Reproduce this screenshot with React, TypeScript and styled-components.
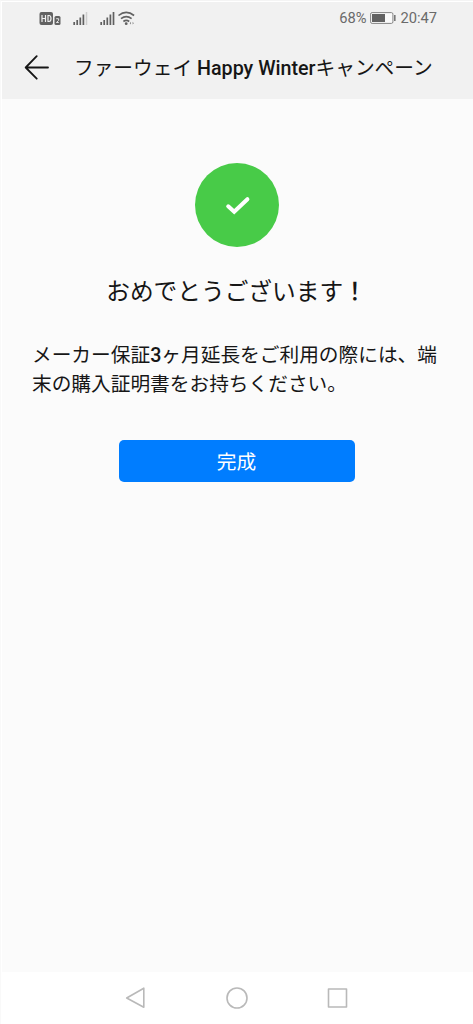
import React from 'react';
import styled, { createGlobalStyle } from 'styled-components';

const GlobalStyle = createGlobalStyle`
  * { box-sizing: border-box; }
  body {
    margin: 0;
    background: #fff;
    color: #161616;
    font-family: 'Noto Sans CJK JP', sans-serif;
  }
`;

const Screen = styled.div`
  width: 473px;
  height: 1024px;
  padding: 1px 0 0 1px;
  border-top: 1px solid #f4f4f4;
  border-left: 1px solid #f9f9f9;
  display: flex;
  flex-direction: column;
  overflow: hidden;
`;

const StatusBar = styled.div`
  flex: none;
  height: 34px;
  padding: 0 36px 2px 37px;
  display: flex;
  align-items: center;
  justify-content: space-between;
  background: #f1f1f1;
`;

const StatusIcons = styled.svg`
  display: block;
`;

const StatusInfo = styled.div`
  display: flex;
  align-items: center;
  gap: 4px;
  color: #6a6a6a;
  font: 400 14.7px/20px Roboto, sans-serif;
`;

const Header = styled.header`
  flex: none;
  height: 63px;
  padding: 0 0 1px 22px;
  display: flex;
  align-items: center;
  gap: 25px;
  background: #f1f1f1;
`;

const BackButton = styled.button`
  width: 25px;
  height: 25px;
  padding: 0;
  border: 0;
  background: none;
  svg { display: block; }
`;

const Title = styled.h1`
  margin: 0;
  font-size: 19.7px;
  line-height: 30px;
  font-weight: 400;
  white-space: nowrap;
`;

const Latin = styled.span`
  font-family: Roboto, sans-serif;
  font-weight: 500;
  line-height: 1;
`;

const Main = styled.main`
  flex: 1;
  padding: 64px 32px 0 30px;
  display: flex;
  flex-direction: column;
  align-items: center;
  background: #fbfbfb;
`;

const Badge = styled.div`
  width: 84px;
  height: 84px;
  border-radius: 50%;
  background: #48cb48;
  svg { display: block; }
`;

const Heading = styled.h2`
  margin: 25px 0 0;
  font-size: 23.7px;
  line-height: 36px;
  font-weight: 400;
  white-space: nowrap;
`;

const Exclamation = styled.span`
  font-weight: 500;
  line-height: 1;
`;

const Message = styled.p`
  align-self: stretch;
  margin: 31px 0 0;
  font-size: 19.7px;
  line-height: 29px;
  white-space: nowrap;
`;

const DoneButton = styled.button`
  width: 236px;
  height: 42px;
  margin-top: 43px;
  padding: 0;
  border: 0;
  border-radius: 5px;
  background: #007dff;
  color: #fff;
  font: 400 19.7px/42px 'Noto Sans CJK JP', sans-serif;
`;

const NavBar = styled.nav`
  flex: none;
  height: 52px;
  padding: 0 124px 0 122px;
  display: flex;
  align-items: center;
  justify-content: space-between;
  background: #fff;
`;

const NavIcon = styled.svg`
  display: block;
  fill: none;
  stroke: #b9b9b9;
  stroke-width: 1.6;
  stroke-linejoin: round;
`;

export default function App() {
  return (
    <Screen>
      <GlobalStyle />
      <StatusBar>
        <StatusIcons width="98" height="20" viewBox="39 8 98 20">
          <rect x="39.5" y="12" width="13.5" height="13" rx="2" fill="#626262" />
          <path d="M42 15v7M45.5 15v7M42 18.5h3.5M48 15.5v6h1q2 0 2-3t-2-3z" fill="none" stroke="#f1f1f1" strokeWidth="1.2" />
          <rect x="54.5" y="16" width="6" height="9" rx="1.5" fill="#626262" />
          <path d="M56.2 18.7h2.4v1.8l-2.2 2h2.4" fill="none" stroke="#f1f1f1" strokeWidth=".9" />
          <path d="M74.2 22v3M77.2 20v5M80.3 17.5v7.5M83.4 14.5v10.5M101.2 22v3M104.2 20v5M107.3 17.5v7.5M110.4 14.5v10.5M113.5 12v13" stroke="#606060" strokeWidth="1.7" />
          <path d="M86.5 12v13" stroke="#cecece" strokeWidth="1.5" />
          <path d="M118.5 15.5q7.7-6.2 15.6 0M121 18.7q5.3-4.2 10.6 0M123.4 21.5q2.9-2.3 5.8 0" fill="none" stroke="#626262" strokeWidth="1.6" />
          <circle cx="126.2" cy="23.7" r="1.4" fill="#626262" />
          <path d="M131 21.8l-1.3 1.4 1.3 1.4zM132.6 21.8l1.3 1.4-1.3 1.4z" fill="#888" />
        </StatusIcons>
        <StatusInfo>
          <span>68%</span>
          <svg width="26" height="12" viewBox="0 0 26 12">
            <rect x=".6" y=".6" width="22.3" height="10.8" rx="1.5" fill="#fafafa" stroke="#858585" />
            <rect x="2" y="2" width="13" height="8" fill="#626262" />
            <rect x="24" y="3" width="1.6" height="6" fill="#777" />
          </svg>
          <span>20:47</span>
        </StatusInfo>
      </StatusBar>
      <Header>
        <BackButton aria-label="戻る">
          <svg width="25" height="25" viewBox="0 0 25 25" fill="none" stroke="#161616" strokeWidth="1.8" strokeLinecap="round" strokeLinejoin="round">
            <path d="M12.7 1.2L1.7 12.5l11 11.2M2 12.5h22" />
          </svg>
        </BackButton>
        <Title>ファーウェイ<Latin> Happy Winter</Latin>キャンペーン</Title>
      </Header>
      <Main>
        <Badge>
          <svg width="84" height="84" viewBox="0 0 84 84" fill="none" stroke="#fff" strokeWidth="4" strokeLinecap="round">
            <path d="M33.2 43.3l6 5.5 13.2-12.6" />
          </svg>
        </Badge>
        <Heading>おめでとうございます<Exclamation>！</Exclamation></Heading>
        <Message>
          メーカー保証<Latin>3</Latin>ヶ月延長をご利用の際には、端<br />
          末の購入証明書をお持ちください。
        </Message>
        <DoneButton>完成</DoneButton>
      </Main>
      <NavBar>
        <NavIcon width="22" height="24" viewBox="0 0 22 24"><path d="M19.8 2.2v19L2.7 12z" /></NavIcon>
        <NavIcon width="24" height="24" viewBox="0 0 24 24"><circle cx="12" cy="12" r="10" /></NavIcon>
        <NavIcon width="22" height="24" viewBox="0 0 22 24"><rect x="1.5" y="3" width="18" height="18" /></NavIcon>
      </NavBar>
    </Screen>
  );
}
